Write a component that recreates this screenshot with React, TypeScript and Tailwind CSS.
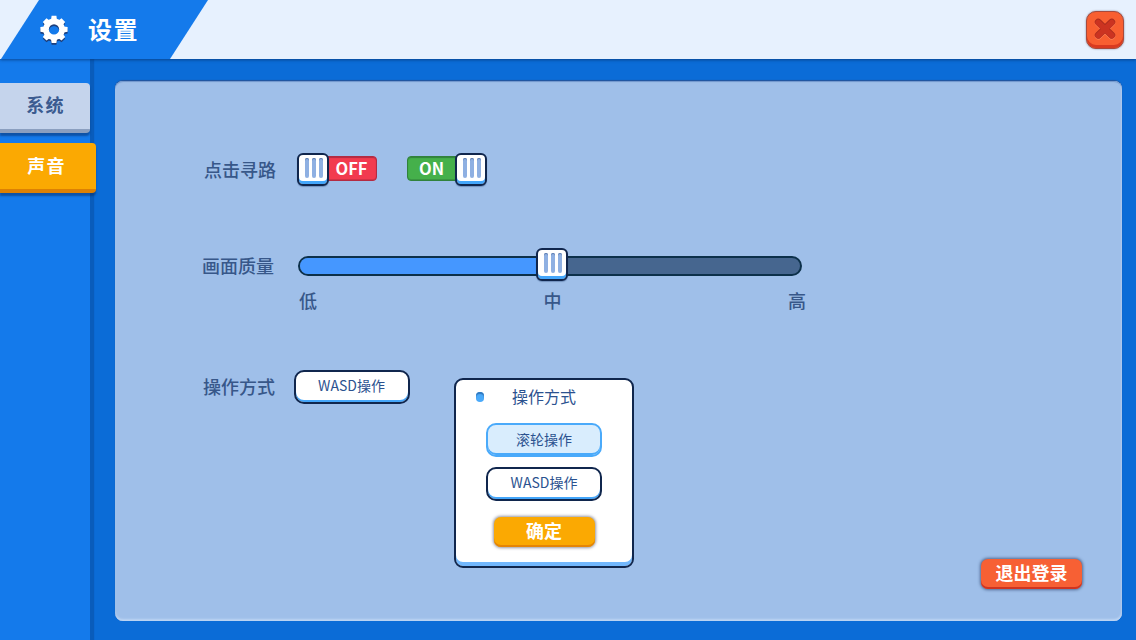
import { useState } from "react";
import type { ReactNode } from "react";

function GearIcon() {
  const shape = (
    <>
      <circle r="8" fill="none" strokeWidth="5.6" stroke="currentColor" />
      {[0, 90, 180, 270].map((a) => (
        <path key={a} d="M-3 -9.5 L-2.4 -13.6 H2.4 L3 -9.5 Z" fill="currentColor" transform={`rotate(${a})`} />
      ))}
      {[45, 135, 225, 315].map((a) => (
        <path key={a} d="M-3.2 -9 L-2.6 -13.2 H2.6 L3.2 -9 Z" fill="currentColor" transform={`rotate(${a})`} />
      ))}
    </>
  );
  return (
    <svg className="h-[30px] w-[30px] shrink-0" viewBox="-15 -14.4 30 30">
      <g className="text-[#1d3f7c]" transform="translate(0 1.8)">{shape}</g>
      <g className="text-white">{shape}</g>
    </svg>
  );
}

function CloseButton() {
  return (
    <button className="flex h-[38px] w-[38px] items-start justify-center rounded-[10px] border-[1.5px] border-[#a84a3c] bg-[#f85f31] pt-[5px] shadow-[inset_0_-3px_0_#d93a20,0_0_2px_rgba(60,50,70,0.6)]">
      <svg className="h-[24px] w-[24px]" viewBox="0 0 24 24" fill="none" strokeLinecap="round">
        <path d="M5.2 5.4 L18.8 18.6 M18.8 5.4 L5.2 18.6" stroke="#ff7d55" strokeWidth="6.8" transform="translate(0 0.6)" />
        <path d="M5.2 5 L18.8 18.2 M18.8 5 L5.2 18.2" stroke="#a92c1d" strokeWidth="6.8" />
        <path d="M5.2 5.7 L18.8 18.5 M18.8 5.7 L5.2 18.5" stroke="#cb3321" strokeWidth="5.8" />
      </svg>
    </button>
  );
}

function Knob() {
  return (
    <span className="flex h-[33px] w-[32px] shrink-0 justify-center gap-[3px] rounded-[6px] border-2 border-[#10264d] bg-white pt-[3px] pl-[1px] shadow-[inset_0_-3px_0_#44a6fa,0_1px_1px_rgba(30,60,110,0.35)]">
      {[0, 1, 2].map((i) => (
        <span key={i} className="h-[20px] w-[4px] rounded-full bg-[#8fb0e2] shadow-[inset_0_1px_0_#5c7cb0]" />
      ))}
    </span>
  );
}

function Toggle({ on }: { on: boolean }) {
  return on ? (
    <div className="flex h-[33px] w-[80px] items-center">
      <span className="-mr-[3px] mt-[-2px] flex h-[25px] w-[51px] items-center justify-center rounded-l-[4px] border border-[#31823c] bg-[#45b04b] pr-[2px] pb-[1px] text-[16.5px] leading-none font-bold text-white shadow-[inset_0_1px_1px_#31823c,inset_0_-1px_0_#3a9642]">
        ON
      </span>
      <Knob />
    </div>
  ) : (
    <div className="flex h-[33px] w-[80px] items-center">
      <div className="z-10 flex">
        <Knob />
      </div>
      <span className="-ml-[3px] mt-[-2px] flex h-[25px] w-[51px] items-center justify-center rounded-r-[4px] border border-[#b32b43] bg-[#f23b4f] pb-[1px] text-[16.5px] leading-none font-bold text-white shadow-[inset_0_1px_1px_#b32b43,inset_0_-1px_0_#d23247]">
        OFF
      </span>
    </div>
  );
}

function Label({ children }: { children: ReactNode }) {
  return <span className="w-[72px] shrink-0 text-[18px] leading-[33px] font-medium whitespace-nowrap text-[#375789]">{children}</span>;
}

function ModeButton({ children, selected = false }: { children: ReactNode; selected?: boolean }) {
  return (
    <button
      className={
        selected
          ? "flex h-[34px] w-[116px] items-center justify-center rounded-[10px] border-2 border-[#4aaafa] bg-[#d9edfd] pb-[3px] text-[14px] leading-none text-[#2b528f] shadow-[inset_0_-2px_0_#4aaafa]"
          : "flex h-[34px] w-[116px] items-center justify-center rounded-[10px] border-2 border-[#10264d] bg-white pb-[4px] text-[14px] leading-none text-[#2b528f] shadow-[inset_0_-2px_0_#44a6fa]"
      }
    >
      {children}
    </button>
  );
}

export default function App() {
  const [quality] = useState(50);
  return (
    <div className="flex h-[640px] w-[1136px] flex-col overflow-hidden bg-[#0b6cd7] font-['Noto_Sans_CJK_SC',sans-serif]">
      <header className="z-10 flex h-[59px] shrink-0 items-start justify-between bg-[#e7f1fe] pr-[12px] shadow-[0_1px_3px_rgba(5,50,110,0.7)]">
        <div className="flex h-[59px] w-[208px] items-center bg-[#147aeb] pl-[39px] [clip-path:polygon(39px_0,208px_0,170px_59px,1px_59px)]">
          <GearIcon />
          <h1 className="ml-[19px] pb-[2px] text-[24px] leading-none font-bold tracking-[1.5px] text-white">设置</h1>
        </div>
        <div className="pt-[11px]">
          <CloseButton />
        </div>
      </header>

      <div className="flex min-h-0 flex-1">
        <nav className="z-[5] flex w-[90px] shrink-0 flex-col gap-[10px] bg-[#147aeb] pt-[24px] shadow-[4px_0_1px_rgba(6,74,154,0.45)]">
          <button className="flex h-[50px] w-[90px] items-center justify-center rounded-r-[4px] border-b-4 border-[#8b9fbf] bg-[#c5d4ec] pb-[4px] pl-[1px] text-[18px] leading-none font-bold tracking-[1.2px] text-[#3b5b90] shadow-[0_3px_2px_rgba(10,50,110,0.55)]">
            系统
          </button>
          <button className="flex h-[50px] w-[96px] items-center justify-center rounded-r-[4px] border-b-4 border-[#dd8104] bg-[#fba902] pr-[3px] pb-[2px] text-[18px] leading-none font-bold tracking-[1.2px] text-white shadow-[0_3px_2px_rgba(10,50,110,0.55)]">
            声音
          </button>
        </nav>

        <main className="flex min-w-0 flex-1 pt-[22px] pr-[14px] pb-[19px] pl-[25px]">
          <section className="flex flex-1 flex-col rounded-[8px] bg-[#9fbfe9] pt-[72px] pl-[87px] shadow-[0_-1px_1px_#24559c,inset_0_1px_1px_#7095cb,inset_0_-2px_2px_#bcd4f3,inset_-1px_0_1px_#b3cef0]">
            <div className="flex h-[33px] items-center pl-[2px]">
              <Label>点击寻路</Label>
              <div className="ml-[21px] flex gap-[30px]">
                <Toggle on={false} />
                <Toggle on />
              </div>
            </div>

            <div className="mt-[62px] flex items-start">
              <div className="flex pt-[1px]">
                <Label>画面质量</Label>
              </div>
              <div className="ml-[24px] w-[508px]">
                <div className="grid h-[33px] w-[504px] items-center">
                  <div className="col-start-1 row-start-1 mt-[2px] h-[20px] overflow-hidden rounded-full border-2 border-[#0c304a] bg-[#46668f]">
                    <div className="h-full bg-[#4597ff]" style={{ width: `${quality}%` }} />
                  </div>
                  <div className="col-start-1 row-start-1 flex justify-center pl-[4px]">
                    <Knob />
                  </div>
                </div>
                <div className="mt-[7px] mb-[1px] flex justify-between pl-[1px] text-[18px] leading-[24px] font-medium text-[#375789]">
                  <span>低</span>
                  <span>中</span>
                  <span>高</span>
                </div>
              </div>
            </div>

            <div className="mt-[57px] flex items-start pl-[1px]">
              <Label>操作方式</Label>
              <div className="ml-[18.5px]">
                <ModeButton>WASD操作</ModeButton>
              </div>
              <div className="mt-[8px] ml-[44.5px] flex h-[190px] w-[180px] flex-col items-center rounded-[9px] border-2 border-[#10264d] bg-white shadow-[inset_0_-4px_0_#72b7fc]">
                <div className="mt-[5px] grid w-full grid-cols-[56px_64px_56px] items-center">
                  <span className="mt-[2px] ml-[20px] h-[10px] w-[8px] rounded-full bg-[#4aaafa] shadow-[inset_0_2px_1px_#3178bd]" />
                  <span className="text-[16px] leading-[22px] whitespace-nowrap text-[#2b528f]">操作方式</span>
                </div>
                <div className="mt-[16px] flex flex-col gap-[10px]">
                  <ModeButton selected>滚轮操作</ModeButton>
                  <ModeButton>WASD操作</ModeButton>
                </div>
                <button className="mt-[16px] flex h-[30px] w-[101px] items-center justify-center rounded-[7px] bg-[#fba902] pb-[4px] text-[18px] leading-none font-bold text-white shadow-[inset_0_-2px_0_#e58505,0_0_3px_1px_rgba(80,80,100,0.6)]">
                  确定
                </button>
              </div>
            </div>

            <div className="mt-auto flex justify-end pr-[40px] pb-[32px]">
              <button className="-mt-[10px] flex h-[30px] w-[101px] items-center justify-center rounded-[7px] bg-[#f76034] pb-[4px] text-[18px] leading-none font-bold text-white shadow-[inset_0_-2px_0_#cf3420,0_0_3px_1px_rgba(40,60,100,0.65)]">
                退出登录
              </button>
            </div>
          </section>
        </main>
      </div>
    </div>
  );
}
